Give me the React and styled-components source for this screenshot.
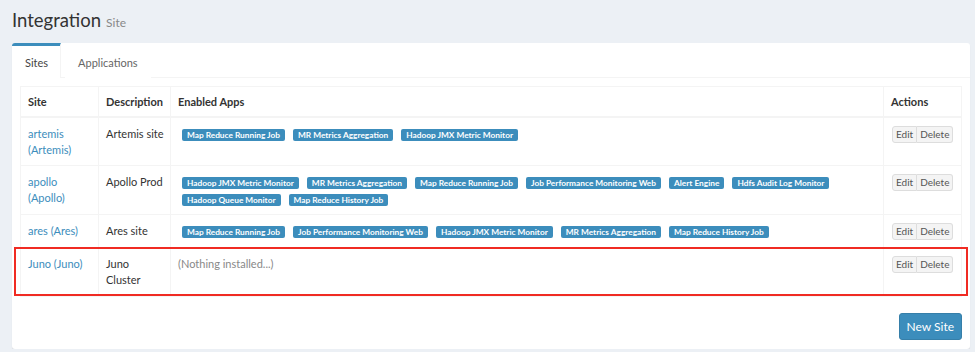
import React from 'react'
import styled, { createGlobalStyle } from 'styled-components'

const GlobalStyle = createGlobalStyle`
    body {
        margin: 0;
        background: #ecf0f5;
        font-family: "Lato", "Noto Sans", sans-serif;
        color: #333;
        font-size: 11px;
    }
`

const sites = [
    {
        name: 'artemis (Artemis)',
        description: 'Artemis site',
        apps: ['Map Reduce Running Job', 'MR Metrics Aggregation', 'Hadoop JMX Metric Monitor'],
    },
    {
        name: 'apollo (Apollo)',
        description: 'Apollo Prod',
        apps: [
            'Hadoop JMX Metric Monitor',
            'MR Metrics Aggregation',
            'Map Reduce Running Job',
            'Job Performance Monitoring Web',
            'Alert Engine',
            'Hdfs Audit Log Monitor',
            'Hadoop Queue Monitor',
            'Map Reduce History Job',
        ],
    },
    {
        name: 'ares (Ares)',
        description: 'Ares site',
        apps: [
            'Map Reduce Running Job',
            'Job Performance Monitoring Web',
            'Hadoop JMX Metric Monitor',
            'MR Metrics Aggregation',
            'Map Reduce History Job',
        ],
    },
    {
        name: 'Juno (Juno)',
        description: 'Juno\nCluster',
        apps: [],
        highlight: true,
    },
]

function App() {
    return (
        <Page>
            <GlobalStyle />
            <Header>
                Integration <Small>Site</Small>
            </Header>
            <TabBox>
                <TabBar>
                    <Tab active>Sites</Tab>
                    <Tab>Applications</Tab>
                </TabBar>
                <TabContent>
                    <Table>
                        <HeadRow>
                            <Th>Site</Th>
                            <Th>Description</Th>
                            <Th>Enabled Apps</Th>
                            <Th>Actions</Th>
                        </HeadRow>
                        {sites.map((site) => (
                            <Row key={site.name} highlight={site.highlight}>
                                <Td>
                                    <SiteLink href="#">{site.name}</SiteLink>
                                </Td>
                                <Td tight>{site.description}</Td>
                                <Td>
                                    {site.apps.length ? (
                                        <Labels>
                                            {site.apps.map((app) => (
                                                <Label key={app}>{app}</Label>
                                            ))}
                                        </Labels>
                                    ) : (
                                        <Muted>(Nothing installed...)</Muted>
                                    )}
                                </Td>
                                <Td>
                                    <BtnGroup>
                                        <SmallButton>Edit</SmallButton>
                                        <SmallButton>Delete</SmallButton>
                                    </BtnGroup>
                                </Td>
                            </Row>
                        ))}
                    </Table>
                    <Footer>
                        <PrimaryButton>New Site</PrimaryButton>
                    </Footer>
                </TabContent>
            </TabBox>
        </Page>
    )
}

const Page = styled.div`
    padding: 0 5px 0 12px;
`
const Header = styled.h1`
    margin: 0;
    height: 43px;
    box-sizing: border-box;
    padding-top: 8px;
    display: flex;
    align-items: baseline;
    gap: 5px;
    font-size: 18.5px;
    line-height: 24px;
    font-weight: 400;
    color: #333;
`
const Small = styled.small`
    font-size: 12px;
    color: #888;
`
const TabBox = styled.div`
    background: #fff;
    border-radius: 3px;
    box-shadow: 0 1px 1px rgba(0, 0, 0, 0.1);
    padding-bottom: 9px;
`
const TabBar = styled.div`
    display: flex;
    gap: 4px;
    height: 35px;
    box-sizing: border-box;
    border-bottom: 1px solid #f4f4f4;
`
const Tab = styled.div`
    padding: 0 12px 0 13px;
    height: 35px;
    box-sizing: border-box;
    line-height: 33px;
    font-size: 11px;
    color: ${(p) => (p.active ? '#444' : '#666')};
    border-top: 3px solid ${(p) => (p.active ? '#3c8dbc' : 'transparent')};
    border-right: 1px solid ${(p) => (p.active ? '#f4f4f4' : 'transparent')};
    background: #fff;
    border-radius: 3px 0 0 0;
`
const TabContent = styled.div`
    padding: 8px 8px 0;
`
const Table = styled.div`
    border: 1px solid #f4f4f4;
    border-right: none;
`
const HeadRow = styled.div`
    display: grid;
    grid-template-columns: 78px 72px 1fr 78px;
    border-bottom: 2px solid #f4f4f4;
`
const Row = styled.div`
    position: relative;
    display: grid;
    grid-template-columns: 78px 72px 1fr 78px;
    border-bottom: 1px solid #f4f4f4;

    &::after {
        content: ${(p) => (p.highlight ? '""' : 'none')};
        position: absolute;
        left: -7px;
        right: -6px;
        top: -1px;
        bottom: -1px;
        border: 2px solid #f02b23;
        pointer-events: none;
    }
`
const Th = styled.div`
    font-weight: 700;
    padding: 7px 7px 6px;
    line-height: 16px;
    border-right: 1px solid #f4f4f4;
`
const Td = styled.div`
    padding: ${(p) => (p.tight ? '8px 2px 7px 7px' : '8px 7px 7px')};
    line-height: 16px;
    white-space: pre-line;
    border-right: 1px solid #f4f4f4;
`
const SiteLink = styled.a`
    color: #3c8dbc;
    text-decoration: none;
`
const Labels = styled.div`
    display: flex;
    flex-wrap: wrap;
    gap: 5px 8px;
    padding: 3px 0 1px 4px;
`
const Label = styled.span`
    display: block;
    background: #3c8dbc;
    color: #fff;
    font-weight: 700;
    font-size: 8.3px;
    height: 12px;
    line-height: 12px;
    padding: 0 5px;
    border-radius: 2px;
    white-space: nowrap;
`
const Muted = styled.span`
    color: #888;
`
const BtnGroup = styled.div`
    display: flex;
    margin-left: 1px;
`
const SmallButton = styled.button`
    font-family: inherit;
    font-size: 10px;
    color: #555;
    background: #f4f4f4;
    border: 1px solid #ddd;
    height: 17px;
    padding: 0 3px;
    line-height: 15px;

    &:first-child {
        border-radius: 3px 0 0 3px;
    }
    &:last-child {
        border-radius: 0 3px 3px 0;
        border-left: none;
    }
`
const Footer = styled.div`
    display: flex;
    justify-content: flex-end;
    margin-top: 16px;
`
const PrimaryButton = styled.button`
    font-family: inherit;
    font-size: 12px;
    color: #fff;
    background: #3c8dbc;
    border: 1px solid #367fa9;
    border-radius: 3px;
    height: 27px;
    padding: 0 7px;
`

export default App
